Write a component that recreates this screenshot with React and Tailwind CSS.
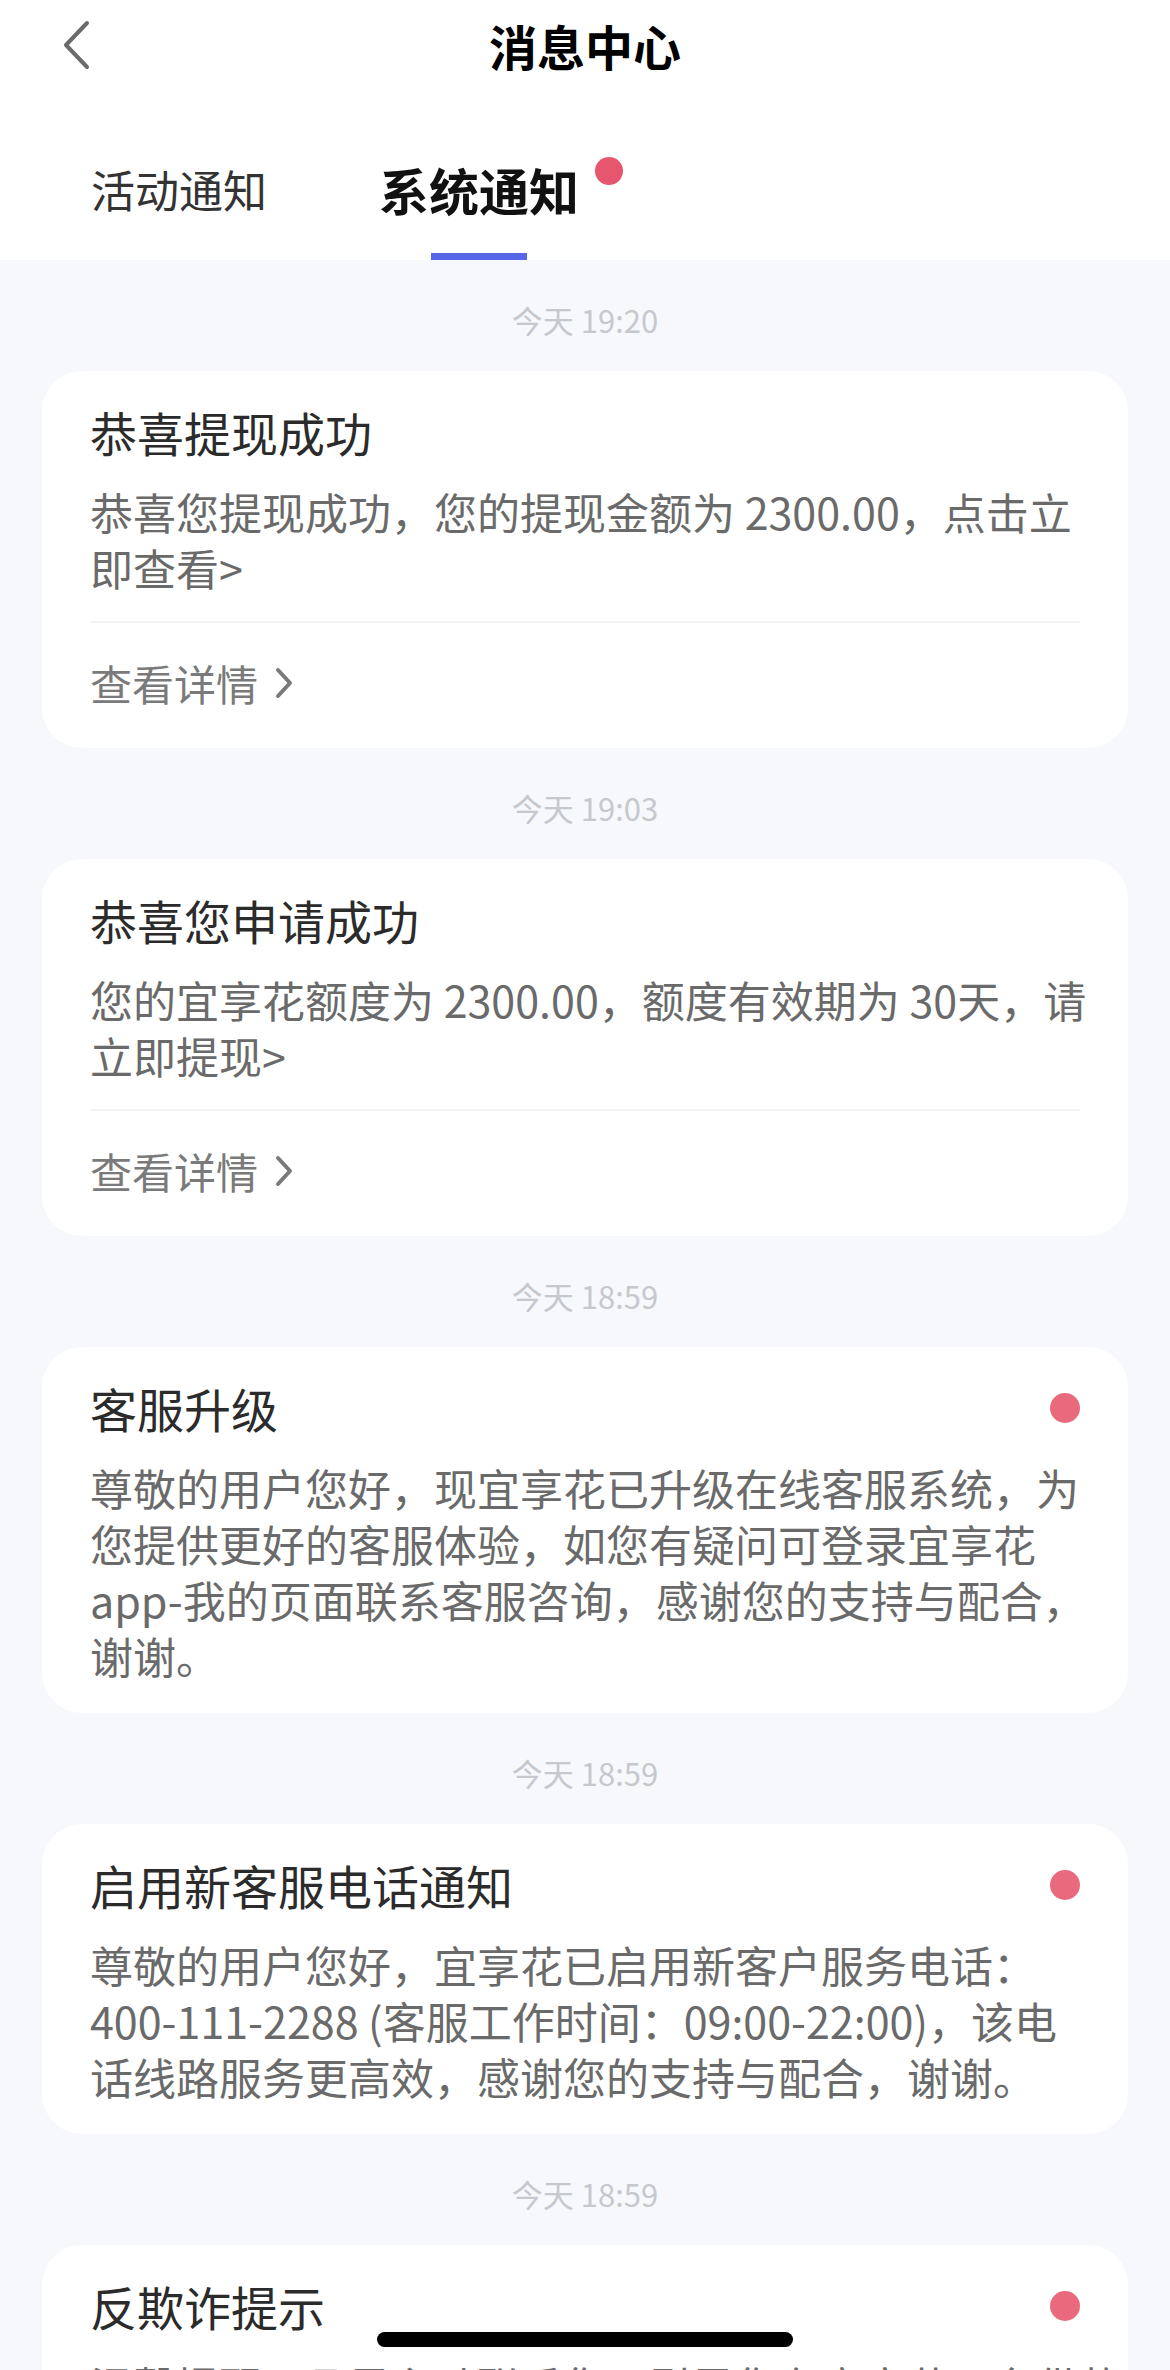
import React from 'react';

const FONT = { fontFamily: '"Noto Sans CJK SC", "Noto Sans", sans-serif' };

const MESSAGES = [
  {
    time: '今天 19:20',
    title: '恭喜提现成功',
    lines: ['恭喜您提现成功，您的提现金额为 2300.00，点击立', '即查看>'],
    detail: true,
  },
  {
    time: '今天 19:03',
    title: '恭喜您申请成功',
    lines: ['您的宜享花额度为 2300.00，额度有效期为 30天，请', '立即提现>'],
    detail: true,
  },
  {
    time: '今天 18:59',
    title: '客服升级',
    unread: true,
    lines: [
      '尊敬的用户您好，现宜享花已升级在线客服系统，为',
      '您提供更好的客服体验，如您有疑问可登录宜享花',
      'app-我的页面联系客服咨询，感谢您的支持与配合，',
      '谢谢。',
    ],
  },
  {
    time: '今天 18:59',
    title: '启用新客服电话通知',
    unread: true,
    lines: [
      '尊敬的用户您好，宜享花已启用新客户服务电话：',
      '400-111-2288 (客服工作时间：09:00-22:00)，该电',
      '话线路服务更高效，感谢您的支持与配合，谢谢。',
    ],
  },
  {
    time: '今天 18:59',
    title: '反欺诈提示',
    unread: true,
    lines: ['温馨提醒：凡是主动联系您，引导您在宜享花平台借款', '的行为均为诈骗，请提高警惕。'],
  },
];

function BackIcon() {
  return (
    <svg width="30" height="52" viewBox="0 0 30 52" fill="none">
      <polyline points="26,4 5,26 26,48" stroke="#6b6b6b" strokeWidth="4" strokeLinecap="round" strokeLinejoin="round" />
    </svg>
  );
}

function ChevronRight() {
  return (
    <svg width="20" height="32" viewBox="0 0 20 32" fill="none">
      <polyline points="4,3 16,16 4,29" stroke="#7a7a7a" strokeWidth="4" strokeLinecap="round" strokeLinejoin="round" />
    </svg>
  );
}

function MessageCard({ msg }) {
  return (
    <div className={`rounded-[40px] bg-white px-[48px] pt-[31px] ${msg.detail ? 'pb-[26px]' : 'pb-[30px]'}`}>
      <div className="flex items-center justify-between">
        <div className="text-[47px] leading-[60px] text-[#2b2b2b]">{msg.title}</div>
        {msg.unread && <span className="h-[30px] w-[30px] rounded-full bg-[#ea6a7d]" />}
      </div>
      <div className="mt-[21px] text-[43px] leading-[56px] text-[#6a6a6a] whitespace-nowrap">
        {msg.lines.map((line, i) => (
          <div key={i}>{line}</div>
        ))}
      </div>
      {msg.detail && (
        <>
          <div className="mt-[26px] h-[2px] bg-[#f2f2f4]" />
          <div className="mt-[32px] mb-[11px] flex items-center">
            <span className="text-[42px] leading-[56px] text-[#7a7a7a]">查看详情</span>
            <span className="ml-[16px] flex items-center">
              <ChevronRight />
            </span>
          </div>
        </>
      )}
    </div>
  );
}

export default function App() {
  return (
    <div className="relative h-[2370px] w-[1170px] overflow-hidden bg-[#f7f8fc]" style={FONT}>
      <header className="bg-white">
        <div className="grid h-[90px] grid-cols-[1fr_auto_1fr] items-center">
          <div className="pl-[61px] flex items-center">
            <BackIcon />
          </div>
          <h1 className="text-[48px] leading-[60px] font-bold text-black">消息中心</h1>
          <div />
        </div>
        <div className="flex h-[170px] items-start pl-[91px] pt-[69px]">
          <div className="text-[44px] leading-[60px] text-[#333]">活动通知</div>
          <div className="ml-[112px] flex flex-col items-center">
            <div className="relative text-[50px] leading-[60px] font-bold text-[#111]">
              系统通知
              <span className="absolute -right-[44px] -top-[2px] h-[28px] w-[28px] rounded-full bg-[#e6576f]" />
            </div>
            <div className="mt-[34px] h-[7px] w-[96px] bg-[#5566e6]" />
          </div>
        </div>
      </header>

      <div className="px-[42px]">
        {MESSAGES.map((msg, i) => (
          <section key={i}>
            <div className="pt-[40px] pb-[31px] text-center text-[31px] leading-[40px] text-[#c6c8cd]">{msg.time}</div>
            <MessageCard msg={msg} />
          </section>
        ))}
      </div>

      <div className="absolute bottom-[23px] left-1/2 h-[15px] w-[416px] -translate-x-1/2 rounded-full bg-black" />
    </div>
  );
}
